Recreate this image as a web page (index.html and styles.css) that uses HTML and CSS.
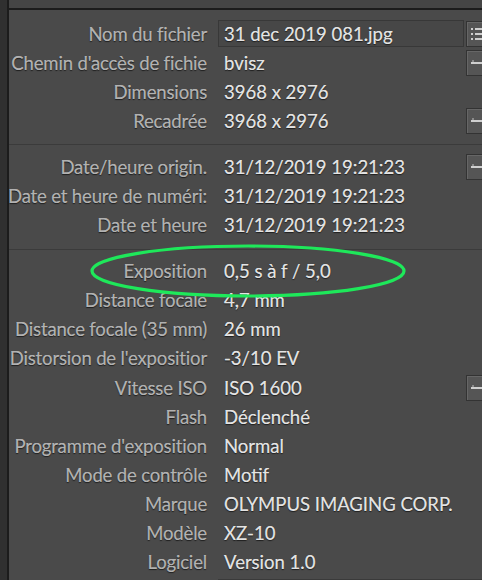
FILE: index.html
```html
<!DOCTYPE html>
<html lang="fr">
<head>
<meta charset="utf-8">
<link rel="stylesheet" href="styles.css">
</head>
<body>
<div class="frame">
  <div class="side"></div>
  <div class="main">
    <div class="topbar"></div>
    <div class="panel">
      <section class="group g1">
        <div class="row">
          <span class="label">Nom du fichier</span>
          <span class="value boxed">31 dec 2019 081.jpg</span>
          <span class="btn"><svg width="20" height="24" viewBox="0 0 20 24"><g fill="#cfcfcf"><rect x="4" y="6" width="2" height="2"/><rect x="4" y="11" width="2" height="2"/><rect x="4" y="16" width="2" height="2"/><rect x="8" y="6" width="12" height="2"/><rect x="8" y="11" width="12" height="2"/><rect x="8" y="16" width="12" height="2"/></g></svg></span>
        </div>
        <div class="row">
          <span class="label">Chemin d'accès de fichie</span>
          <span class="value">bvisz</span>
          <span class="btn"><svg width="20" height="24" viewBox="0 0 20 24"><rect x="4" y="11" width="16" height="2" fill="#cfcfcf"/><rect x="5" y="9" width="2" height="2" fill="#8a8a8a"/></svg></span>
        </div>
        <div class="row">
          <span class="label">Dimensions</span>
          <span class="value">3968 x 2976</span>
          <span class="nobtn"></span>
        </div>
        <div class="row">
          <span class="label">Recadrée</span>
          <span class="value">3968 x 2976</span>
          <span class="btn"><svg width="20" height="24" viewBox="0 0 20 24"><rect x="4" y="11" width="16" height="2" fill="#cfcfcf"/><rect x="5" y="9" width="2" height="2" fill="#8a8a8a"/></svg></span>
        </div>
      </section>
      <section class="group g2">
        <div class="row">
          <span class="label">Date/heure origin.</span>
          <span class="value">31/12/2019 19:21:23</span>
          <span class="btn"><svg width="20" height="24" viewBox="0 0 20 24"><rect x="4" y="11" width="16" height="2" fill="#cfcfcf"/><rect x="5" y="9" width="2" height="2" fill="#8a8a8a"/></svg></span>
        </div>
        <div class="row">
          <span class="label">Date et heure de numéri:</span>
          <span class="value">31/12/2019 19:21:23</span>
          <span class="nobtn"></span>
        </div>
        <div class="row">
          <span class="label">Date et heure</span>
          <span class="value">31/12/2019 19:21:23</span>
          <span class="nobtn"></span>
        </div>
      </section>
      <section class="group g3">
        <div class="row"><span class="label">Exposition</span><span class="value">0,5 s à f / 5,0</span><span class="nobtn"></span></div>
        <div class="row"><span class="label">Distance focale</span><span class="value">4,7 mm</span><span class="nobtn"></span></div>
        <div class="row"><span class="label">Distance focale (35 mm)</span><span class="value">26 mm</span><span class="nobtn"></span></div>
        <div class="row"><span class="label">Distorsion de l'expositior</span><span class="value">-3/10 EV</span><span class="nobtn"></span></div>
        <div class="row">
          <span class="label">Vitesse ISO</span><span class="value">ISO 1600</span>
          <span class="btn"><svg width="20" height="24" viewBox="0 0 20 24"><rect x="4" y="11" width="16" height="2" fill="#cfcfcf"/><rect x="5" y="9" width="2" height="2" fill="#8a8a8a"/></svg></span>
        </div>
        <div class="row"><span class="label">Flash</span><span class="value">Déclenché</span><span class="nobtn"></span></div>
        <div class="row"><span class="label">Programme d'exposition</span><span class="value">Normal</span><span class="nobtn"></span></div>
        <div class="row"><span class="label">Mode de contrôle</span><span class="value">Motif</span><span class="nobtn"></span></div>
        <div class="row"><span class="label">Marque</span><span class="value">OLYMPUS IMAGING CORP.</span><span class="nobtn"></span></div>
        <div class="row"><span class="label">Modèle</span><span class="value">XZ-10</span><span class="nobtn"></span></div>
        <div class="row"><span class="label">Logiciel</span><span class="value">Version 1.0</span><span class="nobtn"></span></div>
        <div class="nextbox"></div>
      </section>
    </div>
  </div>
</div>
<svg class="mark" width="482" height="580" viewBox="0 0 482 580"><ellipse cx="248" cy="271" rx="156" ry="25" fill="none" stroke="#1ee85a" stroke-width="3.2"/></svg>
</body>
</html>
```

FILE: styles.css
```css
html, body {
  margin: 0;
  padding: 0;
  background: #4a4a4a;
  width: 482px;
  height: 580px;
  overflow: hidden;
  font-family: Lato, "Open Sans", sans-serif;
}
.frame {
  display: flex;
  height: 580px;
}
.side {
  width: 7px;
  flex: none;
  background: #303030;
  border-right: 2px solid #1c1c1c;
}
.main {
  flex: 1;
  display: flex;
  flex-direction: column;
  min-width: 0;
}
.topbar {
  height: 8px;
  background: #454545;
  border-bottom: 2px solid #1c1c1c;
  flex: none;
}
.panel {
  display: flex;
  flex-direction: column;
}
.group {
  display: flex;
  flex-direction: column;
}
.g1 { padding-top: 9px; padding-bottom: 9px; border-bottom: 1px solid #3b3b3b; }
.g2 { padding-top: 7px; padding-bottom: 9px; border-bottom: 1px solid #3b3b3b; }
.g3 { padding-top: 7px; }
.row {
  display: grid;
  grid-template-columns: 198px 1fr 16px;
  height: 29.1px;
  align-items: center;
  font-size: 18.5px;
}
.label {
  color: #b2b2b2;
  display: flex;
  justify-content: flex-end;
  min-width: 0;
  white-space: nowrap;
  letter-spacing: -0.15px;
  text-shadow: 0 1px 1px #1e1e1e, 0 0 0.4px #b2b2b2;
}
.value {
  color: #e4e4e4;
  padding-left: 17px;
  white-space: nowrap;
  text-shadow: 0 1px 1px #1e1e1e, 0 0 0.4px #e4e4e4;
}
.value.boxed {
  margin-left: 11px;
  margin-right: 2px;
  padding-left: 5px;
  height: 27px;
  line-height: 27px;
  background: #474747;
  border: 1px solid #383838;
  box-sizing: border-box;
}
.btn {
  width: 20px;
  height: 26px;
  box-sizing: border-box;
  border: 1px solid #333;
  background: #555;
  box-shadow: inset 1px 1px 0 #666;
  display: flex;
  align-items: center;
  overflow: hidden;
}
.btn svg { display: block; flex: none; }
.nextbox {
  margin-left: 209px;
  margin-top: 2px;
  height: 6px;
  border-top: 1px solid #3a3a3a;
  border-left: 1px solid #3a3a3a;
}
.mark {
  position: absolute;
  left: 0;
  top: 0;
  pointer-events: none;
}
```
